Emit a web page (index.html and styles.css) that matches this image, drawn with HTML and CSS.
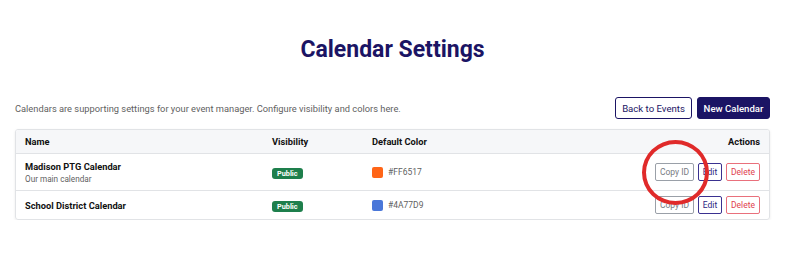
FILE: index.html
```html
<!DOCTYPE html>
<html>

<head>
    <title>Calendar Settings</title>
    <meta charset="UTF-8">
    <meta name="viewport" content="width=device-width, initial-scale=1.0">
    <link rel="stylesheet" href="styles.css">
</head>

<body>
    <div class="page">
        <h1>Calendar Settings</h1>

        <div class="toolbar">
            <p class="intro">Calendars are supporting settings for your event manager. Configure visibility and colors here.</p>
            <div class="toolbar-buttons">
                <button class="btn btn-outline">Back to Events</button>
                <button class="btn btn-primary">New Calendar</button>
            </div>
        </div>

        <div class="table-wrap">
            <table>
                <thead>
                    <tr>
                        <th class="col-name">Name</th>
                        <th class="col-vis">Visibility</th>
                        <th class="col-color">Default Color</th>
                        <th class="col-actions">Actions</th>
                    </tr>
                </thead>
                <tbody>
                    <tr class="row-tall">
                        <td>
                            <div class="cal-name">Madison PTG Calendar</div>
                            <div class="cal-desc">Our main calendar</div>
                        </td>
                        <td><span class="badge">Public</span></td>
                        <td>
                            <div class="color-cell">
                                <span class="swatch" style="background: #FF6517"></span>
                                <span>#FF6517</span>
                            </div>
                        </td>
                        <td class="col-actions">
                            <div class="actions">
                                <button class="sm sm-gray">Copy ID</button>
                                <button class="sm sm-navy">Edit</button>
                                <button class="sm sm-red">Delete</button>
                            </div>
                        </td>
                    </tr>
                    <tr>
                        <td>
                            <div class="cal-name">School District Calendar</div>
                        </td>
                        <td><span class="badge">Public</span></td>
                        <td>
                            <div class="color-cell">
                                <span class="swatch" style="background: #4A77D9"></span>
                                <span>#4A77D9</span>
                            </div>
                        </td>
                        <td class="col-actions">
                            <div class="actions">
                                <button class="sm sm-gray">Copy ID</button>
                                <button class="sm sm-navy">Edit</button>
                                <button class="sm sm-red">Delete</button>
                            </div>
                        </td>
                    </tr>
                </tbody>
            </table>
        </div>
    </div>

    <!-- annotation ring drawn over the first Copy ID button -->
    <div class="ring"></div>
</body>

</html>
```

FILE: styles.css
```css
:root {
    --navy: #1b1464;
    --text: #111111;
    --muted: #5f5f5f;
    --border: #e1e3e6;
}

body {
    margin: 0;
    font-family: Roboto, "Liberation Sans", sans-serif;
    background: #ffffff;
    color: var(--text);
    position: relative;
}

.page {
    padding: 0 30px 0 15px;
}

h1 {
    margin: 0;
    padding-top: 37px;
    height: 63px;
    box-sizing: border-box;
    text-align: center;
    font-size: 23px;
    font-weight: 700;
    color: var(--navy);
    line-height: 26px;
}

.toolbar {
    display: flex;
    justify-content: space-between;
    align-items: center;
    height: 22px;
    margin-top: 34px;
}

.intro {
    margin: 0;
    font-size: 9.3px;
    color: var(--muted);
}

.toolbar-buttons {
    display: flex;
    gap: 5px;
}

.btn {
    font-family: inherit;
    font-size: 9.6px;
    height: 22px;
    padding: 0;
    border-radius: 3px;
    white-space: nowrap;
    cursor: pointer;
}

.btn-outline {
    background: #ffffff;
    color: var(--navy);
    border: 1px solid var(--navy);
    width: 77px;
}

.btn-primary {
    background: var(--navy);
    color: #ffffff;
    border: 1px solid var(--navy);
    width: 73px;
    font-weight: 500;
}

.table-wrap {
    margin-top: 10px;
    border: 1px solid var(--border);
    border-radius: 3px;
    box-shadow: 0 1px 3px rgba(0, 0, 0, 0.08);
    overflow: hidden;
}

table {
    width: 100%;
    border-collapse: collapse;
    font-size: 9.3px;
}

th {
    text-align: left;
    font-weight: 700;
    font-size: 9.3px;
    height: 23px;
    padding: 0 9px;
    background: #f6f7f9;
    border-bottom: 1px solid var(--border);
}

td {
    height: 28px;
    padding: 0 9px;
    vertical-align: middle;
}

tbody tr + tr td {
    border-top: 1px solid var(--border);
}

.row-tall td {
    height: 36px;
}

.col-name {
    width: 229px;
}

.col-vis {
    width: 82px;
}

.col-actions {
    text-align: right;
}

.cal-name {
    font-weight: 700;
    font-size: 9.3px;
}

.cal-desc {
    font-size: 8.2px;
    color: var(--muted);
    margin-top: 2px;
}

.badge {
    display: inline-block;
    background: #1e7f4c;
    color: #ffffff;
    font-size: 7.3px;
    font-weight: 700;
    line-height: 9px;
    padding: 1px 5px;
    border-radius: 3px;
    margin-top: 3px;
}

.color-cell {
    display: flex;
    align-items: center;
    gap: 5px;
    font-size: 8.5px;
    color: var(--muted);
}

.swatch {
    width: 11px;
    height: 11px;
    border-radius: 2px;
    display: inline-block;
}

.actions {
    display: flex;
    justify-content: flex-end;
    gap: 4px;
}

.sm {
    font-family: inherit;
    font-size: 8.5px;
    height: 18px;
    padding: 0;
    background: #ffffff;
    border-radius: 2px;
    white-space: nowrap;
    cursor: pointer;
}

.sm-gray {
    border: 1px solid #9aa0a8;
    color: #777b82;
    width: 39px;
}

.sm-navy {
    border: 1px solid #3a3190;
    color: #2c2480;
    width: 24px;
}

.sm-red {
    border: 1px solid #e9707c;
    color: #e0404f;
    width: 34px;
}

.ring {
    position: absolute;
    left: 642px;
    top: 140px;
    width: 59px;
    height: 57px;
    border: 4px solid #e02a2a;
    border-radius: 50%;
}
```
